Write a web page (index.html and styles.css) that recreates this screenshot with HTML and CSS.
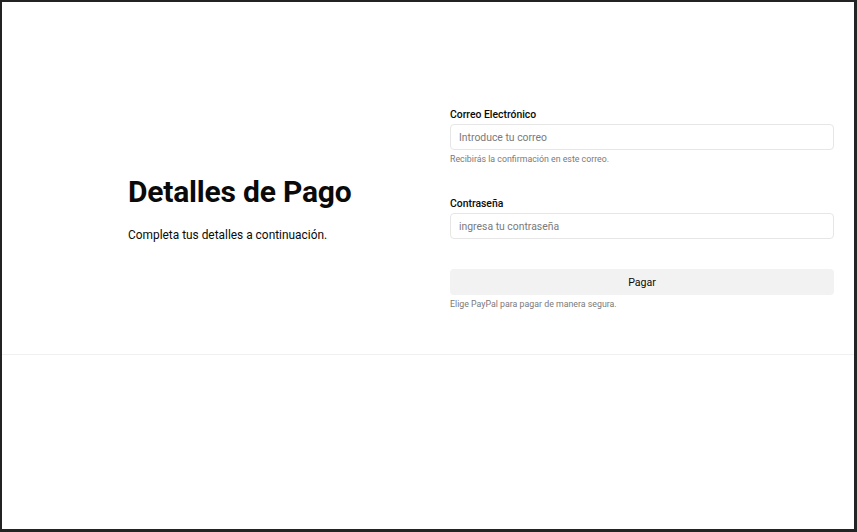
FILE: index.html
```html
<!DOCTYPE html>
<html lang="es">
<head>
<meta charset="utf-8">
<title>Detalles de Pago</title>
<link rel="stylesheet" href="styles.css">
</head>
<body>
<div class="frame">
  <section class="payment">
    <div class="intro">
      <h1 class="title">Detalles de Pago</h1>
      <p class="subtitle">Completa tus detalles a continuación.</p>
    </div>
    <form class="form">
      <div class="field">
        <label class="label" for="email">Correo Electrónico</label>
        <input class="input" id="email" type="email" placeholder="Introduce tu correo">
        <p class="hint">Recibirás la confirmación en este correo.</p>
      </div>
      <div class="field">
        <label class="label" for="pass">Contraseña</label>
        <input class="input" id="pass" type="password" placeholder="ingresa tu contraseña">
      </div>
      <div class="field field-btn">
        <button class="button" type="button">Pagar</button>
        <p class="hint">Elige PayPal para pagar de manera segura.</p>
      </div>
    </form>
  </section>
</div>
</body>
</html>
```

FILE: styles.css
```css
html, body {
  margin: 0;
  padding: 0;
  height: 100%;
}
body {
  background: #232323;
  padding: 2px 3px 3px 2px;
  box-sizing: border-box;
  font-family: Roboto, "Liberation Sans", sans-serif;
  color: #0a0a0a;
}
.frame {
  background: #fff;
  height: 100%;
}
.payment {
  display: flex;
  align-items: center;
  padding: 106px 20px 44px 126px;
  border-bottom: 1px solid #f0f0f0;
}
.intro {
  width: 322px;
}
.title {
  margin: 0;
  font-size: 30px;
  font-weight: 700;
  line-height: 36px;
  letter-spacing: -0.2px;
}
.subtitle {
  margin: 16px 0 0;
  font-size: 11.9px;
  line-height: 18px;
}
.form {
  width: 384px;
  display: flex;
  flex-direction: column;
}
.field {
  display: flex;
  flex-direction: column;
}
.field + .field {
  margin-top: 32px;
}
.field + .field-btn {
  margin-top: 30px;
}
.label {
  font-size: 10.4px;
  font-weight: 500;
  line-height: 14px;
  margin-bottom: 2px;
}
.input {
  height: 26px;
  box-sizing: border-box;
  border: 1px solid #e6e6e6;
  border-radius: 4px;
  padding: 0 8px;
  font-family: inherit;
  font-size: 10.4px;
  color: #0a0a0a;
  background: #fff;
  outline: none;
  margin: 0;
}
.input::placeholder {
  color: #7a7a7a;
}
.hint {
  margin: 4px 0 0;
  font-size: 8.8px;
  line-height: 11px;
  color: #7a7a7a;
}
.button {
  height: 26px;
  border: none;
  border-radius: 4px;
  background: #f2f2f2;
  font-family: inherit;
  font-size: 10.6px;
  color: #0a0a0a;
  cursor: pointer;
  margin: 0;
}
```
